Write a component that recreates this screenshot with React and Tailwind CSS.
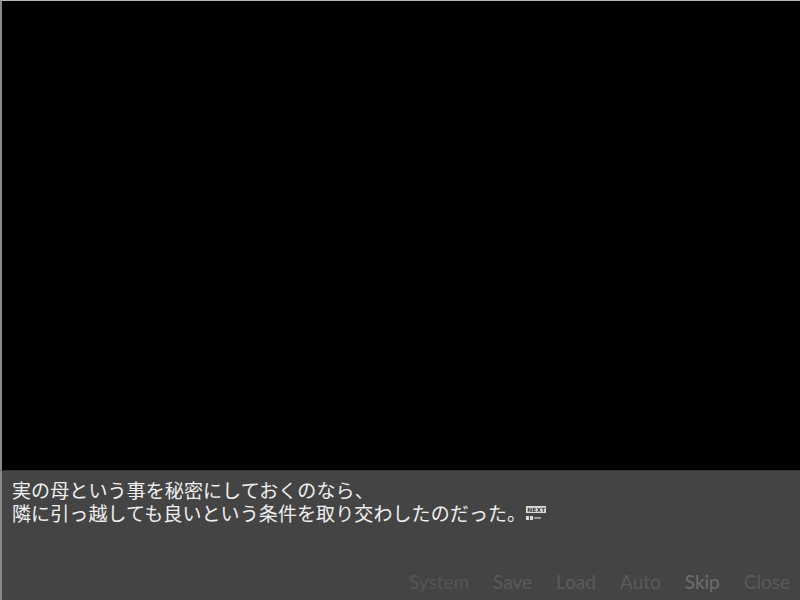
import React from 'react';

const menu = [
  { label: 'System', cls: 'text-[#555555]' },
  { label: 'Save', cls: 'text-[#5a5a5a]' },
  { label: 'Load', cls: 'text-[#5a5a5a]' },
  { label: 'Auto', cls: 'text-[#5a5a5a]' },
  { label: 'Skip', cls: 'text-[#6e6e6e]' },
  { label: 'Close', cls: 'text-[#5a5a5a]' },
];

// little "NEXT" page marker after the message
const NextMark = () => (
  <span className="inline-flex flex-col items-start mb-[4px] gap-[3px]">
    <span className="bg-[#dcdcdc] text-[#3c3c3c] text-[6px] font-bold leading-[7px] px-[1px] font-['DejaVu_Sans',sans-serif]">
      NEXT
    </span>
    <span className="flex items-center gap-[1px]">
      <span className="w-[3px] h-[4px] bg-[#dcdcdc]" />
      <span className="w-[3px] h-[4px] bg-[#dcdcdc]" />
      <span className="w-[7px] h-[2px] bg-[#9a9a9a]" />
    </span>
  </span>
);

export default function App() {
  return (
    <div className="w-[800px] h-[600px] flex flex-col bg-black overflow-hidden">
      {/* scene area */}
      <div className="flex-1 bg-black border-t border-t-[#b8b8b8] border-l-2 border-l-[#8a8a8a]" />

      {/* message window */}
      <div className="h-[130px] bg-[#444444] border-t border-t-[#393939] border-l-2 border-l-[#8a8a8a] flex flex-col">
        <div className="pl-[10px] pt-[7px] text-[#f0f0f0] text-[19px] leading-[23px] tracking-[0.1px] font-['Noto_Sans_CJK_JP',sans-serif]">
          <div className="h-[23px]">実の母という事を秘密にしておくのなら、</div>
          <div className="h-[23px] flex items-end">
            <span>隣に引っ越しても良いという条件を取り交わしたのだった。</span>
            <NextMark />
          </div>
        </div>

        <div className="mt-auto mb-[8px] flex justify-end gap-[24px] pr-[10px] font-['Lato',sans-serif] text-[19px] leading-[20px]">
          {menu.map((m) => (
            <span key={m.label} className={m.cls}>
              {m.label}
            </span>
          ))}
        </div>
      </div>
    </div>
  );
}
